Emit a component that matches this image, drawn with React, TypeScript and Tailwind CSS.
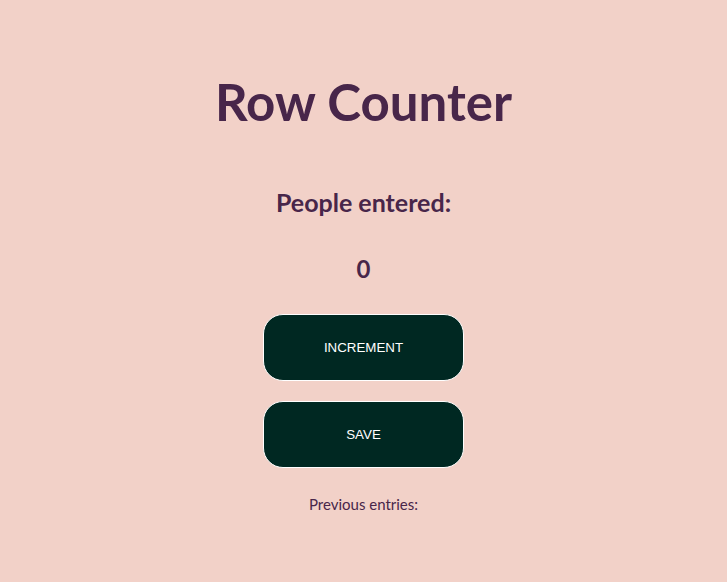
export default function App() {
  const font = {fontFamily: "Lato, 'Open Sans', sans-serif"};
  return (
    <div className="min-h-[582px] w-full bg-[#f2d1c8] text-[#48264a]" style={font}>
      <div className="flex flex-col items-center pt-[77px]">
        <h1 className="text-[51px] font-bold leading-[50px]">Row Counter</h1>
        <h2 className="mt-[60px] text-[25px] font-bold leading-[30px]">People entered:</h2>
        <p className="mt-[37px] text-[24px] font-bold leading-[30px]">0</p>
        <button className="mt-[30px] h-[67px] w-[201px] rounded-[20px] border border-white bg-[#002822] font-['Liberation_Sans',Arial,sans-serif] text-[13.33px] text-white">
          INCREMENT
        </button>
        <button className="mt-[20px] h-[67px] w-[201px] rounded-[20px] border border-white bg-[#002822] font-['Liberation_Sans',Arial,sans-serif] text-[13.33px] text-white">
          SAVE
        </button>
        <p className="mt-[26px] text-[15px] leading-[20px]">Previous entries:</p>
      </div>
    </div>
  );
}
